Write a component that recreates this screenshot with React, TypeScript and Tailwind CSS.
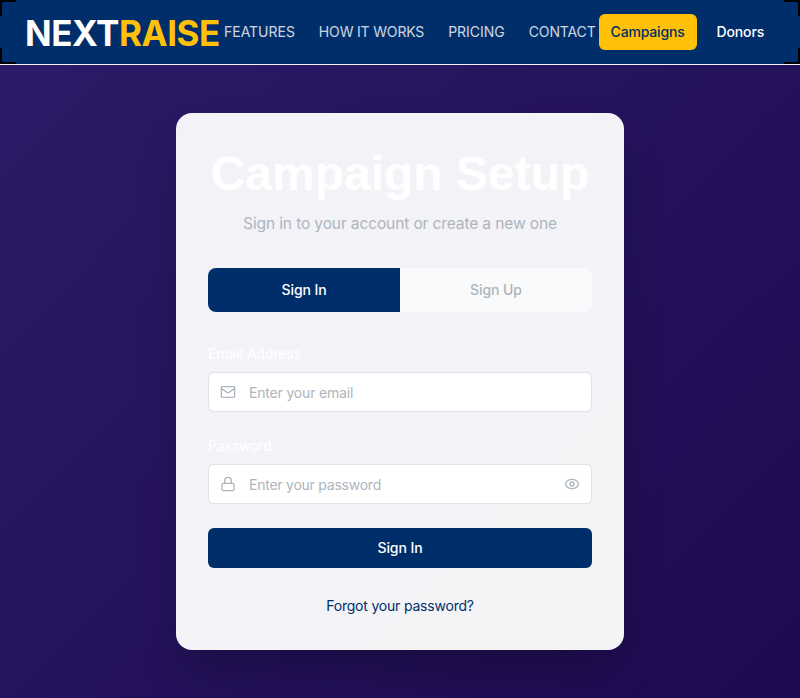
import { Eye, Lock, Mail } from "lucide-react";

function Header() {
  return (
    <header className="relative h-[65px] border-b border-[#f1f3f7] bg-[#002e6a]">
      <div className="flex h-16 items-center pl-[25px]">
        <div className="w-[199px] shrink-0 whitespace-nowrap pt-0.5 text-[35px] leading-10 font-bold tracking-[-0.45px] text-white">
          NEXT<span className="text-[#ffc107]">RAISE</span>
        </div>
        <nav className="flex w-[374.6px] shrink-0 gap-6 whitespace-nowrap text-sm tracking-[-0.02px] text-white/80">
          <a>FEATURES</a>
          <a className="tracking-[-0.17px]">HOW IT WORKS</a>
          <a>PRICING</a>
          <a className="tracking-[-0.14px]">CONTACT</a>
        </nav>
        <div className="flex shrink-0 gap-2 text-sm font-medium tracking-[-0.16px]">
          <button className="h-9 w-[98px] rounded-md bg-[#ffc107] text-[#002e6a]">Campaigns</button>
          <button className="h-9 rounded-md px-3 text-white">Donors</button>
        </div>
      </div>
      <span className="absolute top-0 left-0 size-4 border-t-2 border-l-2 border-black" />
      <span className="absolute top-0 right-0 size-4 border-t-2 border-r-2 border-black" />
      <span className="absolute bottom-0 left-0 size-4 border-b-2 border-l-2 border-black" />
      <span className="absolute right-0 bottom-0 size-4 border-r-2 border-b-2 border-black" />
    </header>
  );
}

export default function App() {
  return (
    <div className="flex h-[698px] flex-col overflow-hidden bg-[linear-gradient(135deg,#2d1b69_0%,#1e0a50_100%)] font-['Inter',sans-serif]">
      <Header />
      <main className="flex justify-center pt-12">
        <section className="h-[537px] w-[448px] rounded-2xl bg-[linear-gradient(135deg,#f3f2f8,#f4f4f6)] p-8 shadow-[0_25px_50px_-12px_rgba(0,0,0,0.3)]">
          <h1 className="text-center font-['Liberation_Sans',sans-serif] text-[48px] leading-[58px] font-bold whitespace-nowrap text-white">Campaign Setup</h1>
          <p className="mt-[9px] text-center text-[15.6px] leading-6 tracking-[-0.16px] text-[#adb5bd]">Sign in to your account or create a new one</p>
          <div className="mt-8 flex h-11 overflow-hidden rounded-lg bg-[#f9fafc] text-sm font-medium tracking-[-0.09px]">
            <button className="flex-1 bg-[#002e6a] text-white">Sign In</button>
            <button className="flex-1 text-[#adb5bd]">Sign Up</button>
          </div>
          <form className="mt-8">
            <label className="block text-sm font-medium tracking-[-0.16px] text-white">Email Address</label>
            <div className="mt-2 flex h-10 items-center rounded-md border border-[#e0e2ec] bg-white px-[11px]">
              <Mail className="size-4 text-[#adb5bd]" strokeWidth={2} />
              <input type="email" placeholder="Enter your email" className="ml-[13px] min-w-0 flex-1 pt-0.5 text-sm tracking-[-0.18px] outline-none placeholder:text-[#adb5bd]" />
            </div>
            <label className="mt-6 block text-sm font-medium tracking-[-0.28px] text-white">Password</label>
            <div className="mt-2 flex h-10 items-center rounded-md border border-[#dee2e9] bg-white px-[11px]">
              <Lock className="size-4 text-[#adb5bd]" strokeWidth={2} />
              <input type="password" placeholder="Enter your password" className="ml-[13px] min-w-0 flex-1 pt-0.5 text-sm tracking-[-0.24px] outline-none placeholder:text-[#adb5bd]" />
              <Eye className="size-4 text-[#adb5bd]" strokeWidth={2} />
            </div>
            <button type="button" className="mt-6 h-10 w-full rounded-md bg-[#002e6a] text-sm font-medium tracking-[-0.08px] text-white">Sign In</button>
          </form>
          <p className="mt-7 text-center text-sm tracking-[-0.2px] text-[#002e6a]">Forgot your password?</p>
        </section>
      </main>
    </div>
  );
}
